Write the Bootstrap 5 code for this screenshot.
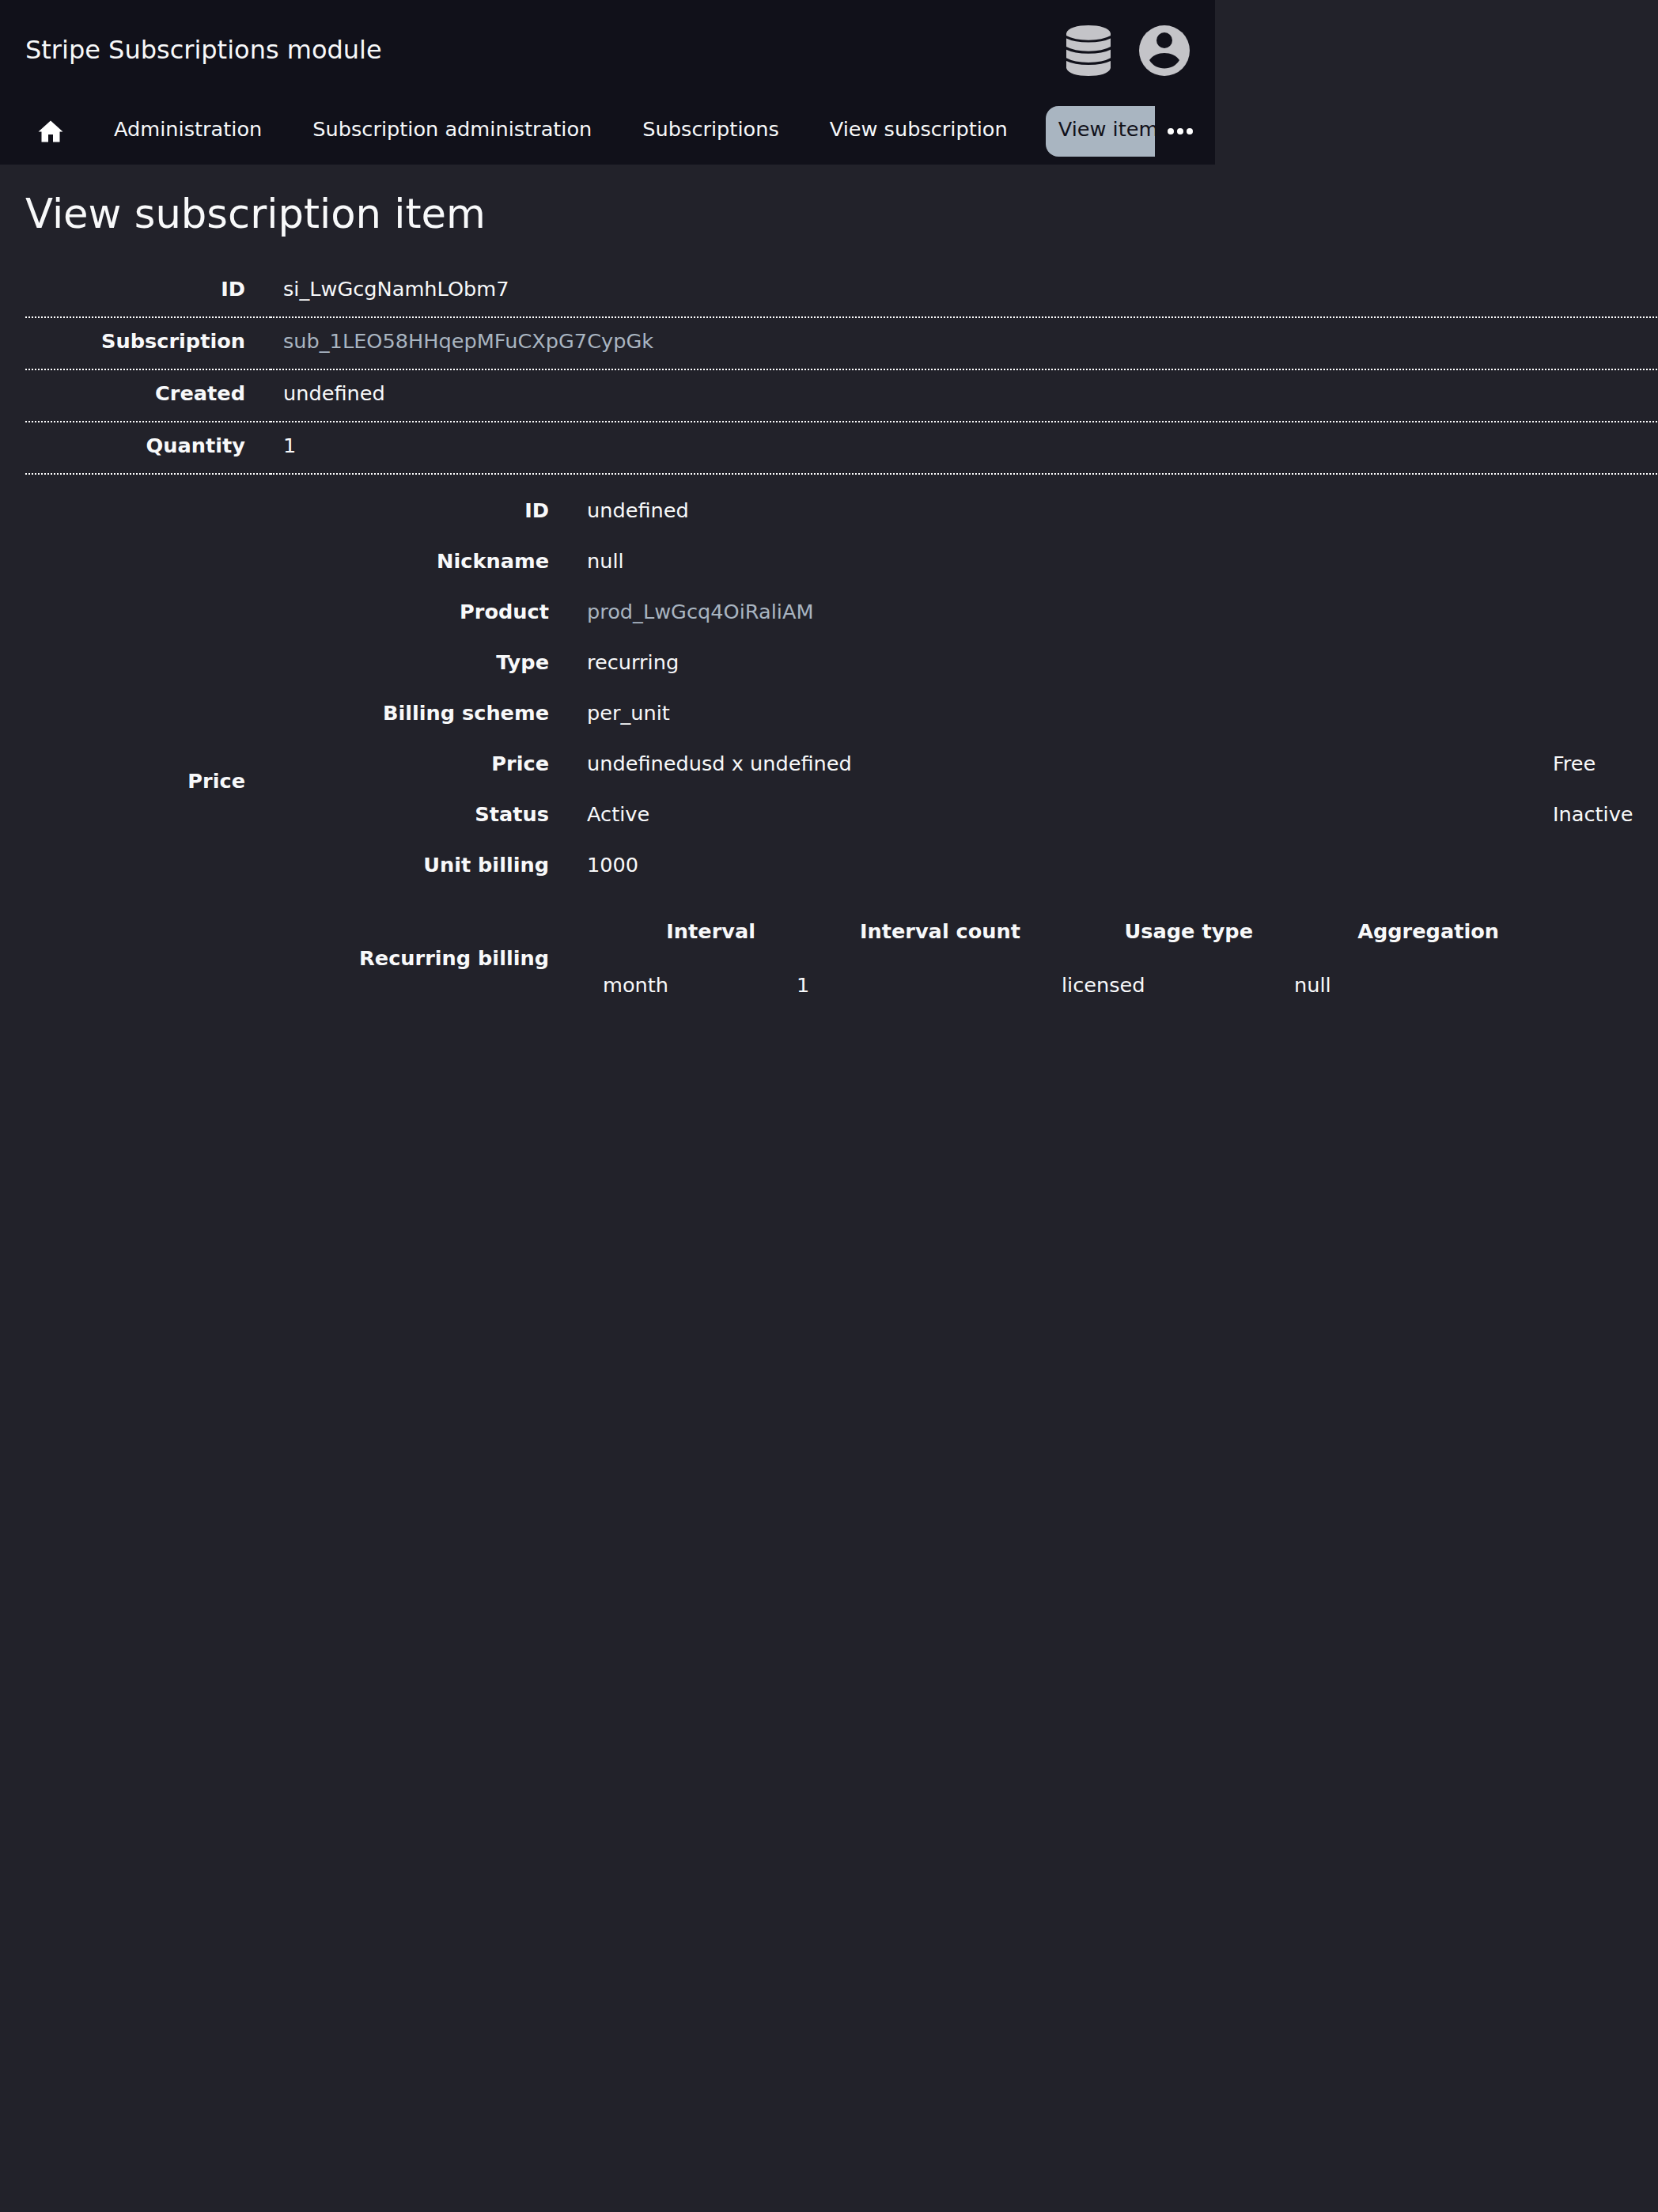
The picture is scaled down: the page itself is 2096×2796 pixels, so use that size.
<!DOCTYPE html>
<html lang="en">
<head>
<meta charset="utf-8">
<title>View subscription item</title>
<link rel="stylesheet" href="https://cdn.jsdelivr.net/npm/bootstrap@5.3.0/dist/css/bootstrap.min.css">
<style>
body{background:#22222a;color:#f8f9fa;font-family:"DejaVu Sans",sans-serif;font-size:25.6px;line-height:32px;min-height:2796px}
.site-head{width:1536px;height:208px;background:#11111a}
.site-top{height:128px;padding:0 32px}
.site-title{font-size:32px;line-height:40px;padding-bottom:2px}
.site-tools{gap:36px}
.crumbs{height:64px;margin-top:6px}
.crumbs a{color:inherit;text-decoration:none;height:64px;padding:13px 16px 0;margin-left:32px;white-space:nowrap;flex:none}
.crumbs .home-link{padding:16px 32px 0 48px;margin:0 -16px 0 0}
.crumbs .current{background:#a9b5c1;color:#11111a;border-radius:16px 0 0 16px;width:138px;overflow:hidden}
.page-title{font-size:51.2px;line-height:64px;margin:0;padding:30px 32px 0;height:128px;font-weight:400}
table{table-layout:fixed;border-collapse:separate;border-spacing:0}
th,td{padding:0;vertical-align:middle;white-space:nowrap}
th{text-align:right;font-weight:700}
td a{color:#a9b5c1;text-decoration:none}
.detail{width:2070px;margin-left:32px}
.line-row>*{height:66px;border-bottom:2px dotted #fff;padding-bottom:6px}
.detail>tbody>tr>th{padding-right:32px}
.line-row>td{padding-left:16px}
.price-row>th{padding-top:76px}
.price-row>td{padding-top:13px}
.inner{width:1754px}
.inner>tbody>tr{height:64px}
.inner>tbody>tr.recur-row{height:172px}
.inner>tbody>tr>td{padding-left:48px}
.recur{width:1185px;margin-left:4px}
.recur th{padding-right:36px}
.recur td{padding-left:16px}
.recur tr{height:68px}
</style>
<script src="https://cdn.jsdelivr.net/npm/bootstrap@5.3.0/dist/js/bootstrap.bundle.min.js"></script>
</head>
<body class="overflow-hidden">
<header class="site-head">
  <div class="site-top d-flex justify-content-between align-items-center">
    <div class="site-title">Stripe Subscriptions module</div>
    <div class="site-tools d-flex align-items-center">
      <svg width="56" height="64" viewBox="0 0 56 64" fill="#c4c4c8"><path d="M0 10C2 3 14 0 28 0S54 3 56 10V13Q46 18.700 28 18.700T0 13z"/><path d="M0 16.500Q10 21.500 28 21.500T56 16.500V27Q46 32.700 28 32.700T0 27z"/><path d="M0 30.700Q10 35.700 28 35.700T56 30.700V41.200Q46 46.900 28 46.900T0 41.200z"/><path d="M0 45Q10 50 28 50T56 45V54C54 61 42 64 28 64S2 61 0 54z"/></svg>
      <svg width="64" height="64" viewBox="0 0 64 64"><circle cx="32" cy="32" r="32" fill="#c4c4c8"/><g fill="#11111a"><circle cx="32" cy="19" r="10"/><path d="M13 44C21 32 43 32 51 44C43 58 21 58 13 44z"/></g></svg>
    </div>
  </div>
  <nav class="crumbs d-flex">
    <a href="#" class="home-link" aria-label="Home"><svg class="d-block" width="32" height="32" viewBox="0 0 32 32" fill="#fff"><path d="M16 2.500L31.500 16.500H27.500V29.500H19V20H13V29.500H4.500V16.500H.5z"/></svg></a>
    <a href="#">Administration</a>
    <a href="#">Subscription administration</a>
    <a href="#">Subscriptions</a>
    <a href="#">View subscription</a>
    <a href="#" class="current">View item</a>
    <svg class="flex-shrink-0" width="64" height="64" viewBox="0 0 64 64" fill="#fff"><circle cx="20" cy="32" r="4"/><circle cx="32" cy="32" r="4"/><circle cx="44" cy="32" r="4"/></svg>
  </nav>
</header>
<main>
  <h1 class="page-title">View subscription item</h1>
  <table class="detail">
    <colgroup><col style="width:310px"><col></colgroup>
    <tbody>
      <tr class="line-row"><th>ID</th><td>si_LwGcgNamhLObm7</td></tr>
      <tr class="line-row"><th>Subscription</th><td><a href="#">sub_1LEO58HHqepMFuCXpG7CypGk</a></td></tr>
      <tr class="line-row"><th>Created</th><td>undefined</td></tr>
      <tr class="line-row"><th>Quantity</th><td>1</td></tr>
      <tr class="price-row"><th>Price</th><td>
        <table class="inner">
          <colgroup><col style="width:352px"><col style="width:1221px"><col></colgroup>
          <tbody>
            <tr><th>ID</th><td>undefined</td></tr>
            <tr><th>Nickname</th><td>null</td></tr>
            <tr><th>Product</th><td><a href="#">prod_LwGcq4OiRaliAM</a></td></tr>
            <tr><th>Type</th><td>recurring</td></tr>
            <tr><th>Billing scheme</th><td>per_unit</td></tr>
            <tr><th>Price</th><td>undefinedusd x undefined</td><td>Free</td></tr>
            <tr><th>Status</th><td>Active</td><td>Inactive</td></tr>
            <tr><th>Unit billing</th><td>1000</td></tr>
            <tr class="recur-row"><th>Recurring billing</th><td>
              <table class="recur">
                <colgroup><col style="width:245px"><col style="width:335px"><col style="width:294px"><col></colgroup>
                <tbody>
                  <tr><th>Interval</th><th>Interval count</th><th>Usage type</th><th>Aggregation</th></tr>
                  <tr><td>month</td><td>1</td><td>licensed</td><td>null</td></tr>
                </tbody>
              </table></td></tr>
          </tbody>
        </table></td></tr>
    </tbody>
  </table>
</main>
</body>
</html>
